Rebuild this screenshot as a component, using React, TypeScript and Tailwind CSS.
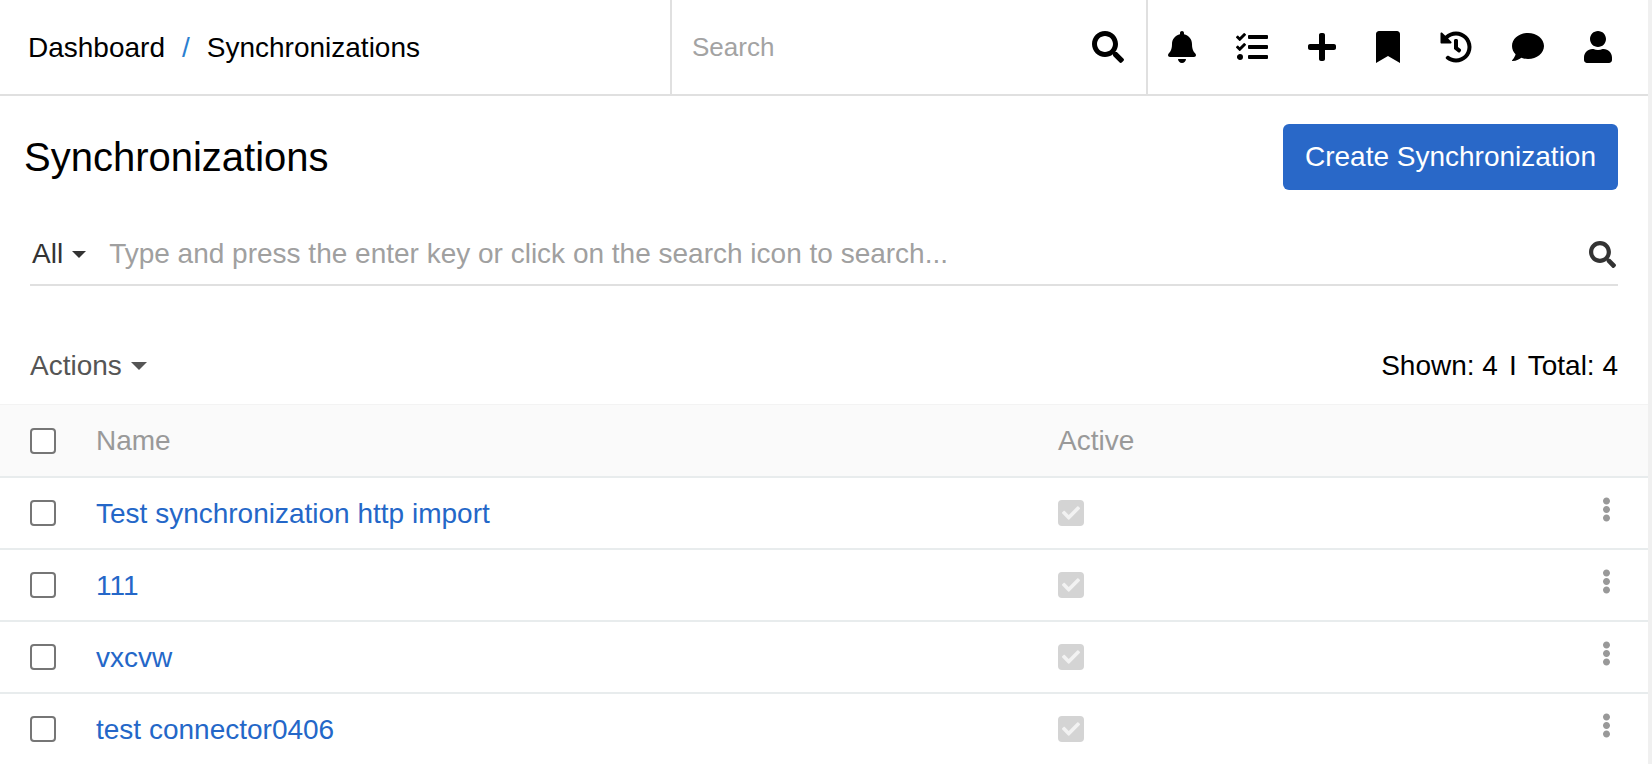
import { FaBell, FaBookmark, FaCheck, FaComment, FaEllipsisV, FaHistory, FaPlus, FaSearch, FaTasks, FaUser } from "react-icons/fa";

const rows = ["Test synchronization http import", "111", "vxcvw", "test connector0406"];

function Checkbox() {
  return <span className="block w-[26px] h-[26px] shrink-0 rounded-[4px] border-2 border-[#767676] bg-white" />;
}

function ActiveBox() {
  return (
    <span className="flex w-[26px] h-[26px] items-center justify-center rounded-[4px] bg-[#d4d4d4] text-[#f2f2f2]">
      <FaCheck size={18} />
    </span>
  );
}

export default function App() {
  return (
    <div className="flex h-[764px] w-full overflow-hidden bg-white font-['Liberation_Sans',Arial,sans-serif] text-black">
      <div className="flex-1 min-w-0">
        {/* Top bar */}
        <header className="flex h-[96px] items-stretch border-b-2 border-[#e0e0e0]">
          <nav className="flex w-[672px] items-center border-r-2 border-[#e0e0e0] pl-[28px] pt-[1px] text-[28px]">
            <span>Dashboard</span>
            <span className="mx-[17px] text-[#2c7fd0]">/</span>
            <span>Synchronizations</span>
          </nav>
          <div className="flex w-[476px] items-center justify-between border-r-2 border-[#e0e0e0] pl-[20px] pr-[22px]">
            <span className="text-[26px] text-[#a3a3a3]">Search</span>
            <FaSearch size={32} />
          </div>
          <div className="flex items-center gap-[40px] pl-[20px]">
            <FaBell className="h-[32px] w-[28px]" />
            <FaTasks className="h-[32px] w-[32px]" />
            <FaPlus className="h-[32px] w-[28px]" />
            <FaBookmark className="h-[32px] w-[24px]" />
            <FaHistory className="h-[32px] w-[32px]" />
            <FaComment className="h-[32px] w-[32px]" />
            <FaUser className="h-[32px] w-[28px]" />
          </div>
        </header>

        {/* Title */}
        <div className="flex items-center justify-between pl-[24px] pr-[30px] pt-[28px]">
          <h1 className="text-[40px] font-normal leading-[66px]">Synchronizations</h1>
          <button className="h-[66px] w-[335px] rounded-[6px] bg-[#2968c8] text-[28px] text-white">
            Create Synchronization
          </button>
        </div>

        {/* Filter */}
        <div className="mx-[30px] mt-[32px] flex h-[64px] items-start border-b-2 border-[#e0e0e0] pt-[10px]">
          <div className="flex h-[44px] items-center text-[28px] text-[#333]">
            <span className="pl-[2px]">All</span>
            <span className="ml-[9px] h-0 w-0 border-x-[7px] border-t-[7px] border-x-transparent border-t-[#333]" />
          </div>
          <span className="ml-[23px] flex-1 text-[28px] leading-[44px] text-[#a0a0a0]">
            Type and press the enter key or click on the search icon to search...
          </span>
          <FaSearch size={27} className="mr-[2px] mt-[9px] text-[#333]" />
        </div>

        {/* Actions */}
        <div className="flex h-[118px] items-center justify-between px-[30px] pt-[42px] text-[28px]">
          <div className="flex items-center text-[#555]">
            <span>Actions</span>
            <span className="ml-[9px] h-0 w-0 border-x-[8px] border-t-[8px] border-x-transparent border-t-[#555]" />
          </div>
          <div className="flex">
            <span>Shown: 4</span>
            <span className="mx-[11px]">I</span>
            <span>Total: 4</span>
          </div>
        </div>

        {/* Table */}
        <div className="flex h-[74px] items-center gap-[40px] border-y border-b-2 border-t-[#f3f3f3] border-b-[#e8eced] bg-[#fafafa] pl-[30px] text-[28px] text-[#999]">
          <Checkbox />
          <span className="w-[922px] pt-[1px]">Name</span>
          <span className="pt-[1px]">Active</span>
        </div>
        {rows.map((name) => (
          <div key={name} className="flex h-[72px] items-center gap-[40px] border-b-2 border-[#e8eced] pl-[30px] pr-[29px] text-[28px]">
            <Checkbox />
            <a className="w-[922px] pt-[1px] text-[#2467c8]">{name}</a>
            <ActiveBox />
            <FaEllipsisV size={25} className="ml-auto mb-[7px] text-[#999]" />
          </div>
        ))}
      </div>
      {/* Scrollbar strip */}
      <div className="w-[4px] shrink-0 bg-[#f0f0f0]" />
    </div>
  );
}
